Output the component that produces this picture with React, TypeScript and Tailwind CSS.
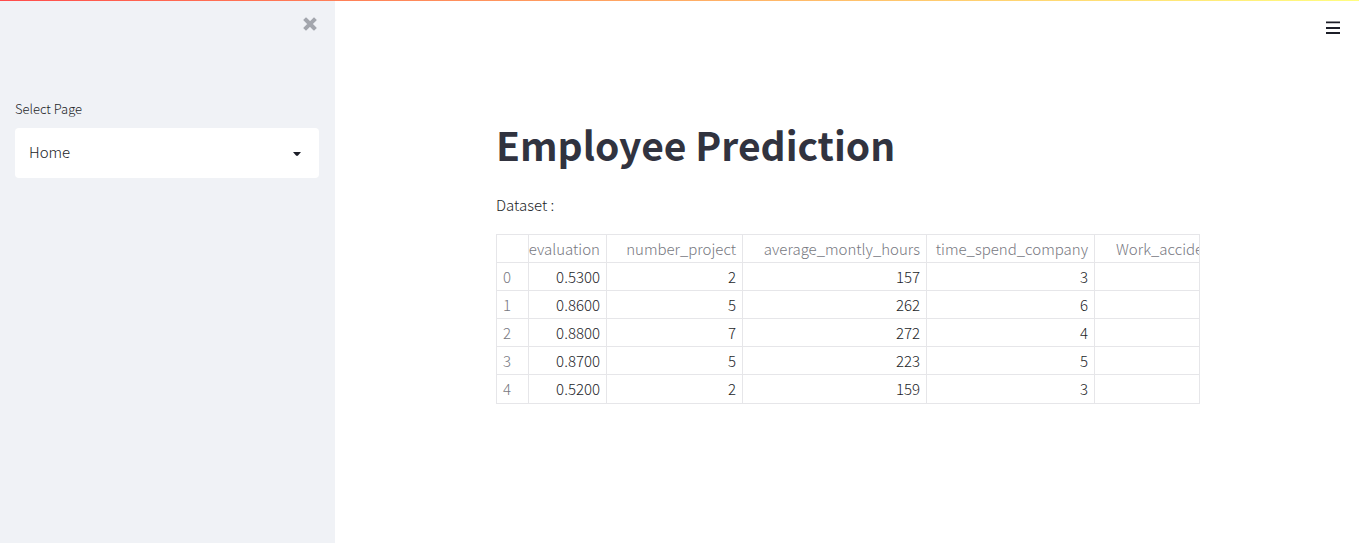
import React from "react";

type Row = {
  evaluation: string;
  projects: number;
  hours: number;
  years: number;
};

const rows: Row[] = [
  { evaluation: "0.5300", projects: 2, hours: 157, years: 3 },
  { evaluation: "0.8600", projects: 5, hours: 262, years: 6 },
  { evaluation: "0.8800", projects: 7, hours: 272, years: 4 },
  { evaluation: "0.8700", projects: 5, hours: 223, years: 5 },
  { evaluation: "0.5200", projects: 2, hours: 159, years: 3 },
];

function Sidebar() {
  return (
    <aside className="w-[335px] shrink-0 bg-[#f0f2f6] px-[15px]">
      <div className="flex h-[98px] items-start justify-end pt-4">
        <button type="button" aria-label="Close sidebar" className="mr-[3px] p-0 text-[#a3a6ad]">
          <svg viewBox="0 0 14 14" className="block size-[14px]" fill="none" stroke="currentColor" strokeWidth="4" strokeLinecap="square">
            <path d="M3 3l8 8M11 3l-8 8" />
          </svg>
        </button>
      </div>
      <label htmlFor="page" className="block text-[13px] leading-5">
        Select Page
      </label>
      <div className="relative mr-px mt-[9px]">
        <select
          id="page"
          defaultValue="Home"
          className="block h-[50px] w-full appearance-none rounded bg-white px-[14px] pb-0.5 text-[15px] leading-6 outline-none"
        >
          <option>Home</option>
        </select>
        <svg viewBox="0 0 8 4" className="pointer-events-none absolute right-[18px] top-6 h-1 w-2" fill="currentColor">
          <path d="M0 0h8L5 3.6Q4 4.4 3 3.6z" />
        </svg>
      </div>
    </aside>
  );
}

const head = "border-b border-r border-[#e6e6e9] px-1.5 text-right font-light text-[#777881]";
const cell = "border-b border-r border-[#e6e6e9] px-1.5 text-right";

function Dataset() {
  return (
    <div className="overflow-hidden border border-[#e6e6e9]">
      <table className="w-full table-fixed border-separate border-spacing-0 text-[15px] leading-6">
        <colgroup>
          <col className="w-8" />
          <col className="w-[78px]" />
          <col className="w-[136px]" />
          <col className="w-[184px]" />
          <col className="w-[168px]" />
          <col />
        </colgroup>
        <thead>
          <tr className="h-7">
            <th className={head} />
            <th className={head}>
              <div className="flex justify-end">evaluation</div>
            </th>
            <th className={head}>number_project</th>
            <th className={head}>average_montly_hours</th>
            <th className={head}>time_spend_company</th>
            <th className="overflow-hidden whitespace-nowrap border-b border-[#e6e6e9] pl-[21px] text-left font-light text-[#777881]">
              Work_accident
            </th>
          </tr>
        </thead>
        <tbody>
          {rows.map((row, i) => (
            <tr key={i} className="h-7 last:*:border-b-0">
              <th scope="row" className="border-b border-r border-[#e6e6e9] px-1.5 text-left font-light text-[#777881]">
                {i}
              </th>
              <td className={cell}>{row.evaluation}</td>
              <td className={cell}>{row.projects}</td>
              <td className={cell}>{row.hours}</td>
              <td className={cell}>{row.years}</td>
              <td className="border-b border-[#e6e6e9]" />
            </tr>
          ))}
        </tbody>
      </table>
    </div>
  );
}

export default function App() {
  return (
    <div className="flex min-h-screen flex-col bg-white font-['Noto_Sans_CJK_SC',sans-serif] font-light text-[#1c1e28]">
      <div className="h-px bg-linear-to-r from-[#ff4b4b] to-[#fffd80]" />
      <div className="flex grow">
        <Sidebar />
        <div className="min-w-0 grow">
          <header className="flex h-[108px] items-start justify-end pr-[19px] pt-5">
            <button type="button" aria-label="Main menu" className="p-0">
              <svg viewBox="0 0 14 14" className="block size-[14px]" fill="currentColor">
                <path d="M0 .4h14v1.8H0zM0 6.1h14v1.8H0zM0 11.1h14v1.8H0z" />
              </svg>
            </button>
          </header>
          <main className="pl-0.5">
            <div className="mx-auto max-w-[704px]">
              <h1 className="text-[39px] font-bold leading-[70px] text-[#31333f]">Employee Prediction</h1>
              <p className="mb-[17px] mt-3.5 text-[15px] leading-6">Dataset :</p>
              <Dataset />
            </div>
          </main>
        </div>
      </div>
    </div>
  );
}
